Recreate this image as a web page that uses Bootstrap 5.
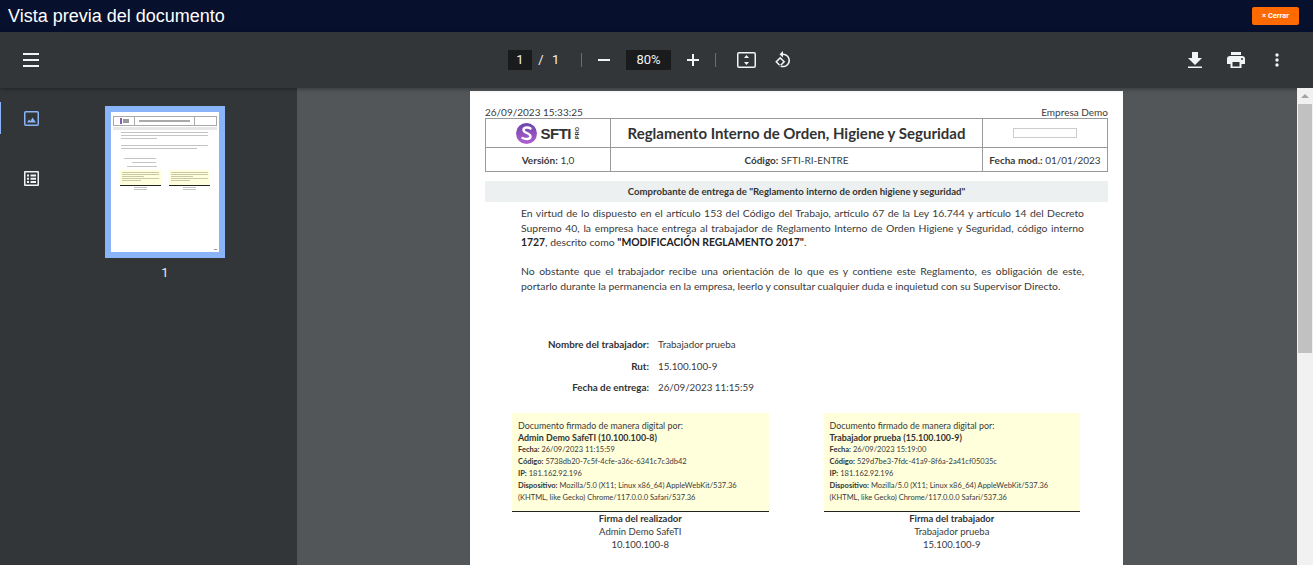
<!DOCTYPE html>
<html lang="es">
<head>
    <meta charset="UTF-8">
    <meta name="viewport" content="width=device-width, initial-scale=1.0">
    <title>Vista previa del documento</title>

    <link href="https://cdn.jsdelivr.net/npm/bootstrap@5.3.0/dist/css/bootstrap.min.css" rel="stylesheet">
    <style>
        html, body { height: 100%; }
        body { overflow: hidden; background: #525659; font-family: "Liberation Sans", Arial, sans-serif; }

        /* barra superior */
        .top-bar { height: 32px; background: #07112e; color: #fff; padding: 0 14px 0 8px; }
        .top-title { font-size: 18px; line-height: 32px; margin: 0; font-weight: 400; font-family: "Liberation Sans", Arial, sans-serif; }
        .close-btn { width: 47px; height: 18px; padding: 0; border: 0; border-radius: 2px; background: #ff6a00; color: #fff; font-size: 7.5px; font-weight: 700; font-family: Roboto, sans-serif; }

        /* toolbar visor */
        .viewer-bar { height: 56px; background: #323639; color: #f1f3f4; position: relative; z-index: 2; box-shadow: 0 1px 4px rgba(0,0,0,.35); flex-shrink: 0; font-family: Roboto, sans-serif; }
        .bar-left { width: 508px; padding-left: 23px; }
        .bar-right { gap: 24px; padding-right: 28px; }
        .page-box { width: 24px; height: 20px; background: #191b1c; text-align: center; font-size: 13px; line-height: 20px; }
        .zoom-box { width: 45px; height: 20px; background: #191b1c; text-align: center; font-size: 13px; line-height: 20px; margin: 0 16px; }
        .slash-txt { font-size: 13px; margin: 0 6px 0 4px; width: 10px; text-align: center; }
        .count-txt { font-size: 13px; width: 29px; }
        .bar-sep { width: 1px; height: 14px; background: #6b6f72; }
        .ic { display: block; fill: #f1f3f4; flex-shrink: 0; }

        /* sidebar */
        .viewer-body { min-height: 0; }
        .side-panel { width: 297px; background: #323639; flex-shrink: 0; }
        .side-rail { width: 62px; padding-top: 14px; gap: 28px; position: relative; }
        .rail-item { height: 32px; }
        .rail-active { position: absolute; left: 0; top: 14px; width: 1px; height: 32px; background: #8ab4f8; }
        .thumb-col { padding: 18px 0 0 43px; width: 163px; color: #e8eaed; }
        .thumb-frame { width: 120px; height: 152px; border: 6px solid #8ab4f8; background: #fff; padding: 4px 2px 0; }
        .thumb-num { font-family: Roboto, sans-serif; font-size: 13px; text-align: center; margin-top: 5px; }
        .t-table { border: 1px solid #aaa; height: 10px; margin-bottom: 1px; }
        .t-cell { border-right: 1px solid #aaa; }
        .t-cell:last-child { border-right: 0; }
        .t-band { height: 3px; background: #e6e8e8; margin-bottom: 2px; }
        .t-line { height: 1px; background: #c4c4c4; margin: 0 9px 2px 8px; }
        .t-space { height: 1px; margin-bottom: 3px; }
        .t-rows { margin: 9px 0 0 10px; gap: 3px; }
        .t-sigs { padding: 0 7px; gap: 8px; margin-top: 3px; }
        .t-sig { flex: 1 1 0; }
        .t-yellow { background: #ffffdc; height: 16px; border-bottom: 1px solid #222; padding: 2px 2px 0; }
        .t-mini { height: 1px; background: #c9c9a8; margin-bottom: 1px; }
        .t-under { height: 1px; background: #c4c4c4; margin: 1px 14px 0; }
        .t-foot { width: 3px; height: 1px; background: #999; position: absolute; right: 2px; bottom: 2px; }

        /* zona del documento */
        .doc-area { min-width: 0; overflow: hidden; background: #525659; padding-top: 3px; }
        .scroll-strip { width: 16px; background: #f1f1f1; flex-shrink: 0; position: relative; z-index: 3; }
        .scroll-up { height: 16px; }
        .scroll-thumb { height: 249px; background: #c1c1c1; margin: 0 1px; }
        .arrow-up { width: 0; height: 0; border-left: 4px solid transparent; border-right: 4px solid transparent; border-bottom: 4px solid #a3a3a3; }

        .doc-sheet { width: 653px; margin-left: 173px; height: 600px; background: #fff; padding: 15px 15px 0; color: #3a3a3a; font-family: Lato, "Open Sans", sans-serif; font-size: 10px; line-height: 12px; }
        .doc-table { width: 100%; table-layout: fixed; border-collapse: collapse; margin: 0 0 9px; }
        .doc-table td { border: 1px solid #999; padding: 0; text-align: center; vertical-align: middle; }
        .doc-table .r1 td { height: 29px; }
        .doc-table .r2 td { height: 24px; }
        .doc-title { font-size: 15px; font-weight: 700; color: #333; }
        .logo-txt { font-family: "Liberation Sans", sans-serif; font-size: 15px; font-weight: 700; color: #333; letter-spacing: -.5px; line-height: 1; }
        .logo-pro { font-family: "Liberation Sans", sans-serif; font-size: 5.5px; font-weight: 700; color: #333; writing-mode: vertical-rl; transform: rotate(180deg); line-height: 1; }
        .empty-box { width: 64px; height: 10px; border: 1px solid #ccc; margin: 0 auto; }
        .doc-band { height: 21px; line-height: 21px; background: #ecf0f1; text-align: center; font-size: 9.6px; font-weight: 700; color: #333; }
        .doc-body { margin: 4px 24px 0 36px; font-size: 10.4px; line-height: 14.5px; text-align: justify; }
        .doc-body p { margin: 0 0 14.5px; }
        .doc-body b { color: #222; }
        .doc-fields { margin-top: 45px; gap: 9px; font-size: 9.8px; }
        .field-row { line-height: 12.5px; }
        .field-key { width: 164px; text-align: right; font-weight: 700; color: #333; margin-right: 9px; }
        .sig-row { margin: 19px 28px 0 27px; gap: 55px; }
        .sig-col { width: 257px; }
        .sig-box { height: 99px; background: #ffffdc; border-bottom: 1px solid #222; padding: 7px 6px 0; font-size: 8.9px; line-height: 12.2px; }
        .sig-box b { color: #333; }
        .sig-small { font-size: 7.5px; line-height: 12px; }
        .sig-foot { text-align: center; font-size: 9.5px; line-height: 13px; margin-top: 0; padding-top: 0; }
        .sig-foot b { color: #333; }
    </style>
</head>
<body class="d-flex flex-column">

    <!-- Barra superior -->
    <div class="top-bar d-flex align-items-center justify-content-between flex-shrink-0">
        <h1 class="top-title">Vista previa del documento</h1>
        <button type="button" class="close-btn">× Cerrar</button>
    </div>

    <!-- Toolbar del visor -->
    <div class="viewer-bar d-flex align-items-center">
        <div class="bar-left">
            <svg class="ic" width="16" height="14" viewBox="0 0 16 14"><path d="M0 0h16v2H0zM0 6h16v2H0zM0 12h16v2H0z"/></svg>
        </div>
        <div class="d-flex align-items-center">
            <div class="page-box">1</div>
            <span class="slash-txt">/</span>
            <span class="count-txt">1</span>
            <div class="bar-sep"></div>
            <svg class="ic ms-3" width="12" height="2" viewBox="0 0 12 2"><path d="M0 0h12v2H0z"/></svg>
            <div class="zoom-box">80%</div>
            <svg class="ic" width="12" height="12" viewBox="0 0 12 12"><path d="M5 0h2v5h5v2H7v5H5V7H0V5h5z"/></svg>
            <div class="bar-sep mx-3"></div>
            <svg class="ic me-3" width="19" height="16" viewBox="0 0 19 16" style="margin-left:5px"><path fill-rule="evenodd" d="M2 0h15a2 2 0 0 1 2 2v12a2 2 0 0 1-2 2H2a2 2 0 0 1-2-2V2a2 2 0 0 1 2-2zm0 1.5a.5.5 0 0 0-.5.5v12c0 .3.2.5.5.5h15c.3 0 .5-.2.5-.5V2a.5.5 0 0 0-.5-.5zM9.5 3 12 6H7zM7 10h5l-2.500 3z"/></svg>
            <svg class="ic" width="18" height="18" viewBox="0 0 18 18" style="margin-left:2px"><path fill-rule="evenodd" d="M9 0v2.500c3.700.1 7 3 7 6.900 0 3.800-3.100 6.900-7 6.900-1.600 0-3-.5-4.200-1.400l1.100-1.100c.9.600 2 1 3.100 1 3 0 5.400-2.400 5.400-5.400S12 4.100 9 4v2.500L5.500 3.200zM6.200 5.800l5 5-5 5-5-5zm0 2.100-2.900 2.900 2.900 2.900 2.900-2.900z"/></svg>
        </div>
        <div class="bar-right d-flex align-items-center ms-auto">
            <svg class="ic" width="16" height="16" viewBox="0 0 16 16"><path d="M5 0h6v6h4l-7 7-7-7h4zM1 14.500h14V16H1z"/></svg>
            <svg class="ic" width="18" height="16" viewBox="0 0 18 16"><path fill-rule="evenodd" d="M4 0h10v3H4zM3 4h12a3 3 0 0 1 3 3v5h-3.500v4h-11v-4H0V7a3 3 0 0 1 3-3zm2.500 6v4.500h7V10zM15 6a1 1 0 1 0 0 2 1 1 0 0 0 0-2z"/></svg>
            <svg class="ic" width="16" height="14" viewBox="0 0 16 14"><circle cx="8" cy="2" r="1.700"/><circle cx="8" cy="7" r="1.700"/><circle cx="8" cy="12" r="1.700"/></svg>
        </div>
    </div>

    <div class="viewer-body d-flex flex-grow-1">
        <!-- Panel lateral -->
        <aside class="side-panel d-flex">
            <div class="side-rail d-flex flex-column align-items-center">
                <span class="rail-active"></span>
                <div class="rail-item d-flex align-items-center">
                    <svg width="15" height="15" viewBox="0 0 15 15"><rect x=".75" y=".75" width="13.500" height="13.500" rx="1" fill="#323639" stroke="#8ab4f8" stroke-width="1.500"/><path d="M3 11.500 5 8.500l1.500 1.500L8.500 6.500l3.500 5z" fill="#8ab4f8"/></svg>
                </div>
                <div class="rail-item d-flex align-items-center">
                    <svg width="15" height="15" viewBox="0 0 15 15" fill="#f1f3f4"><path fill-rule="evenodd" d="M1 0h13a1 1 0 0 1 1 1v13a1 1 0 0 1-1 1H1a1 1 0 0 1-1-1V1a1 1 0 0 1 1-1zm.5 1.500v12h12v-12z"/><path d="M3 3.500h2v2H3zM6.500 3.500H12v2H6.500zM3 6.700h2v2H3zM6.500 6.700H12v2H6.500zM3 9.900h2v2H3zM6.500 9.900H12v2H6.500z"/></svg>
                </div>
            </div>
            <div class="thumb-col">
                <div class="thumb-frame position-relative">
                    <div class="t-table d-flex">
                        <div class="t-cell d-flex align-items-center justify-content-center" style="width:21px"><svg width="9" height="6" viewBox="0 0 9 6"><rect width="2" height="6" fill="#8a5cb5"/><rect x="3" y="1" width="6" height="4" fill="#999"/></svg></div>
                        <div class="t-cell d-flex align-items-center justify-content-center flex-grow-1"><div class="t-mini w-100 mx-1 mb-0" style="height:2px;background:#aaa"></div></div>
                        <div class="t-cell" style="width:21px"></div>
                    </div>
                    <div class="t-band"></div>
                    <div class="t-line"></div>
                    <div class="t-line"></div>
                    <div class="t-line" style="margin-right:60px"></div>
                    <div class="t-space"></div>
                    <div class="t-line"></div>
                    <div class="t-line" style="margin-right:20px"></div>
                    <div class="t-rows d-flex flex-column">
                        <div class="t-line m-0" style="width:32px;margin-left:1px!important"></div>
                        <div class="t-line m-0" style="width:24px;margin-left:9px!important"></div>
                        <div class="t-line m-0" style="width:30px;margin-left:4px!important"></div>
                    </div>
                    <div class="t-sigs d-flex">
                        <div class="t-sig">
                            <div class="t-yellow"><div class="t-mini"></div><div class="t-mini"></div><div class="t-mini" style="width:60%"></div><div class="t-mini"></div><div class="t-mini" style="width:50%"></div></div>
                            <div class="t-under"></div><div class="t-under"></div>
                        </div>
                        <div class="t-sig">
                            <div class="t-yellow"><div class="t-mini"></div><div class="t-mini"></div><div class="t-mini" style="width:60%"></div><div class="t-mini"></div><div class="t-mini" style="width:50%"></div></div>
                            <div class="t-under"></div><div class="t-under"></div>
                        </div>
                    </div>
                    <span class="t-foot"></span>
                </div>
                <div class="thumb-num">1</div>
            </div>
        </aside>

        <!-- Documento -->
        <main class="doc-area flex-grow-1">
            <div class="doc-sheet">
                <div class="d-flex justify-content-between">
                    <span>26/09/2023 15:33:25</span>
                    <span>Empresa Demo</span>
                </div>
                <table class="doc-table">
                    <colgroup><col style="width:125px"><col><col style="width:125px"></colgroup>
                    <tr class="r1">
                        <td>
                            <div class="d-flex align-items-center justify-content-center gap-1">
                                <svg width="21" height="21" viewBox="0 0 21 21">
                                    <defs><linearGradient id="logoGrad" x1="0" y1="0" x2="0" y2="1"><stop offset="0" stop-color="#6a45a8"/><stop offset="1" stop-color="#b45fd0"/></linearGradient></defs>
                                    <circle cx="10.500" cy="10.500" r="10.500" fill="url(#logoGrad)"/>
                                    <path d="M14.500 5.500c-2-1.500-7-1.500-7 1.500 0 3.500 7 2.500 7 6.500 0 3-5 3-8 1.500" fill="none" stroke="#fff" stroke-width="2.400" stroke-linecap="round"/>
                                </svg>
                                <span class="logo-txt">SFTI</span><span class="logo-pro">PRO</span>
                            </div>
                        </td>
                        <td class="doc-title">Reglamento Interno de Orden, Higiene y Seguridad</td>
                        <td><div class="empty-box"></div></td>
                    </tr>
                    <tr class="r2">
                        <td><b>Versión:</b> 1,0</td>
                        <td><b>Código:</b> SFTI-RI-ENTRE</td>
                        <td><b>Fecha mod.:</b> 01/01/2023</td>
                    </tr>
                </table>
                <div class="doc-band">Comprobante de entrega de "Reglamento interno de orden higiene y seguridad"</div>
                <div class="doc-body">
                    <p>En virtud de lo dispuesto en el artículo 153 del Código del Trabajo, artículo 67 de la Ley 16.744 y artículo 14 del Decreto Supremo 40, la empresa hace entrega al trabajador de Reglamento Interno de Orden Higiene y Seguridad, código interno <b>1727</b>, descrito como <b>"MODIFICACIÓN REGLAMENTO 2017"</b>.</p>
                    <p>No obstante que el trabajador recibe una orientación de lo que es y contiene este Reglamento, es obligación de este, portarlo durante la permanencia en la empresa, leerlo y consultar cualquier duda e inquietud con su Supervisor Directo.</p>
                </div>
                <div class="doc-fields d-flex flex-column">
                    <div class="field-row d-flex"><span class="field-key">Nombre del trabajador:</span><span>Trabajador prueba</span></div>
                    <div class="field-row d-flex"><span class="field-key">Rut:</span><span>15.100.100-9</span></div>
                    <div class="field-row d-flex"><span class="field-key">Fecha de entrega:</span><span>26/09/2023 11:15:59</span></div>
                </div>
                <div class="sig-row d-flex">
                    <div class="sig-col">
                        <div class="sig-box">
                            <div>Documento firmado de manera digital por:</div>
                            <div><b>Admin Demo SafeTI (10.100.100-8)</b></div>
                            <div class="sig-small"><b>Fecha:</b> 26/09/2023 11:15:59</div>
                            <div class="sig-small"><b>Código:</b> 5738db20-7c5f-4cfe-a36c-6341c7c3db42</div>
                            <div class="sig-small"><b>IP:</b> 181.162.92.196</div>
                            <div class="sig-small"><b>Dispositivo:</b> Mozilla/5.0 (X11; Linux x86_64) AppleWebKit/537.36 (KHTML, like Gecko) Chrome/117.0.0.0 Safari/537.36</div>
                        </div>
                        <div class="sig-foot">
                            <div><b>Firma del realizador</b></div>
                            <div>Admin Demo SafeTI</div>
                            <div>10.100.100-8</div>
                        </div>
                    </div>
                    <div class="sig-col">
                        <div class="sig-box">
                            <div>Documento firmado de manera digital por:</div>
                            <div><b>Trabajador prueba (15.100.100-9)</b></div>
                            <div class="sig-small"><b>Fecha:</b> 26/09/2023 15:19:00</div>
                            <div class="sig-small"><b>Código:</b> 529d7be3-7fdc-41a9-8f6a-2a41cf05035c</div>
                            <div class="sig-small"><b>IP:</b> 181.162.92.196</div>
                            <div class="sig-small"><b>Dispositivo:</b> Mozilla/5.0 (X11; Linux x86_64) AppleWebKit/537.36 (KHTML, like Gecko) Chrome/117.0.0.0 Safari/537.36</div>
                        </div>
                        <div class="sig-foot">
                            <div><b>Firma del trabajador</b></div>
                            <div>Trabajador prueba</div>
                            <div>15.100.100-9</div>
                        </div>
                    </div>
                </div>
            </div>
        </main>

        <div class="scroll-strip">
            <div class="scroll-up d-flex align-items-center justify-content-center"><span class="arrow-up"></span></div>
            <div class="scroll-thumb"></div>
        </div>
    </div>

    <script src="https://cdn.jsdelivr.net/npm/bootstrap@5.3.0/dist/js/bootstrap.bundle.min.js"></script>
</body>
</html>
